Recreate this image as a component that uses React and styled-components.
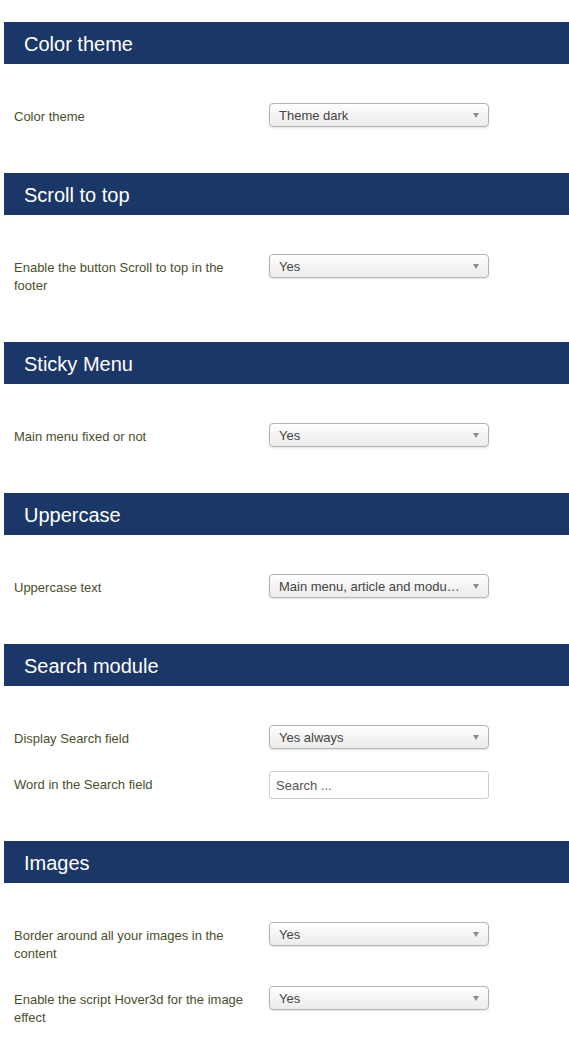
import styled, { createGlobalStyle } from "styled-components";

const GlobalStyle = createGlobalStyle`
    html, body {
        margin: 0;
        padding: 0;
        background: #fff;
    }
    body {
        font-family: "Liberation Sans", Arial, sans-serif;
        font-size: 13px;
    }
`;

const Page = styled.main`
    /* headers run to the right edge, 4px gutter on the left */
    padding: 22px 0 0 4px;
`;

const Section = styled.section`
    display: flex;
    flex-direction: column;
`;

const Header = styled.h2`
    margin: 0;
    box-sizing: border-box;
    height: 42px;
    display: flex;
    align-items: center;
    padding: 2px 0 0 20px;
    background: #1b3767;
    color: #fff;
    font-size: 20px;
    font-weight: normal;
    line-height: 1;
`;

const Body = styled.div`
    display: flex;
    flex-direction: column;
    gap: 18px;
    padding: 39px 0 42px 10px;
`;

const Row = styled.div`
    display: flex;
    align-items: flex-start;
`;

const Label = styled.label`
    width: 240px;
    margin-right: 15px;
    padding: 5px 0;
    line-height: 18px;
    color: #4a4f2a;
`;

const Select = styled.div`
    position: relative;
    box-sizing: border-box;
    width: 220px;
    height: 24px;
    padding: 1px 28px 0 9px;
    border: 1px solid #b4b4b4;
    border-radius: 4px;
    background: linear-gradient(#ffffff, #f2f2f2 60%, #ececec);
    box-shadow: 0 1px 2px rgba(0, 0, 0, 0.12);
    color: #444;
    line-height: 21px;
    white-space: nowrap;
    overflow: hidden;
    text-overflow: ellipsis;

    &::after {
        content: "";
        position: absolute;
        right: 9px;
        top: 9px;
        border-left: 3.5px solid transparent;
        border-right: 3.5px solid transparent;
        border-top: 5px solid #8a8a8a;
    }
`;

const Input = styled.input`
    box-sizing: border-box;
    width: 220px;
    height: 28px;
    padding: 1px 6px 0;
    border: 1px solid #ccc;
    border-radius: 3px;
    font-family: inherit;
    font-size: 13px;
    color: #555;
    outline: none;

    &::placeholder {
        color: #555;
    }
`;

const sections = [
    {
        title: "Color theme",
        rows: [{ label: "Color theme", value: "Theme dark" }],
    },
    {
        title: "Scroll to top",
        rows: [{ label: "Enable the button Scroll to top in the footer", value: "Yes" }],
    },
    {
        title: "Sticky Menu",
        rows: [{ label: "Main menu fixed or not", value: "Yes" }],
    },
    {
        title: "Uppercase",
        rows: [{ label: "Uppercase text", value: "Main menu, article and module titles" }],
    },
    {
        title: "Search module",
        rows: [
            { label: "Display Search field", value: "Yes always" },
            { label: "Word in the Search field", input: "Search ..." },
        ],
    },
    {
        title: "Images",
        rows: [
            { label: "Border around all your images in the content", value: "Yes" },
            { label: "Enable the script Hover3d for the image effect", value: "Yes" },
        ],
    },
];

const App = () => {
    return (
        <Page>
            <GlobalStyle />
            {sections.map((s) => (
                <Section key={s.title}>
                    <Header>{s.title}</Header>
                    <Body>
                        {s.rows.map((r) => (
                            <Row key={r.label}>
                                <Label>{r.label}</Label>
                                {r.input ? (
                                    <Input placeholder={r.input} />
                                ) : (
                                    <Select>{r.value}</Select>
                                )}
                            </Row>
                        ))}
                    </Body>
                </Section>
            ))}
        </Page>
    );
};

export default App;
